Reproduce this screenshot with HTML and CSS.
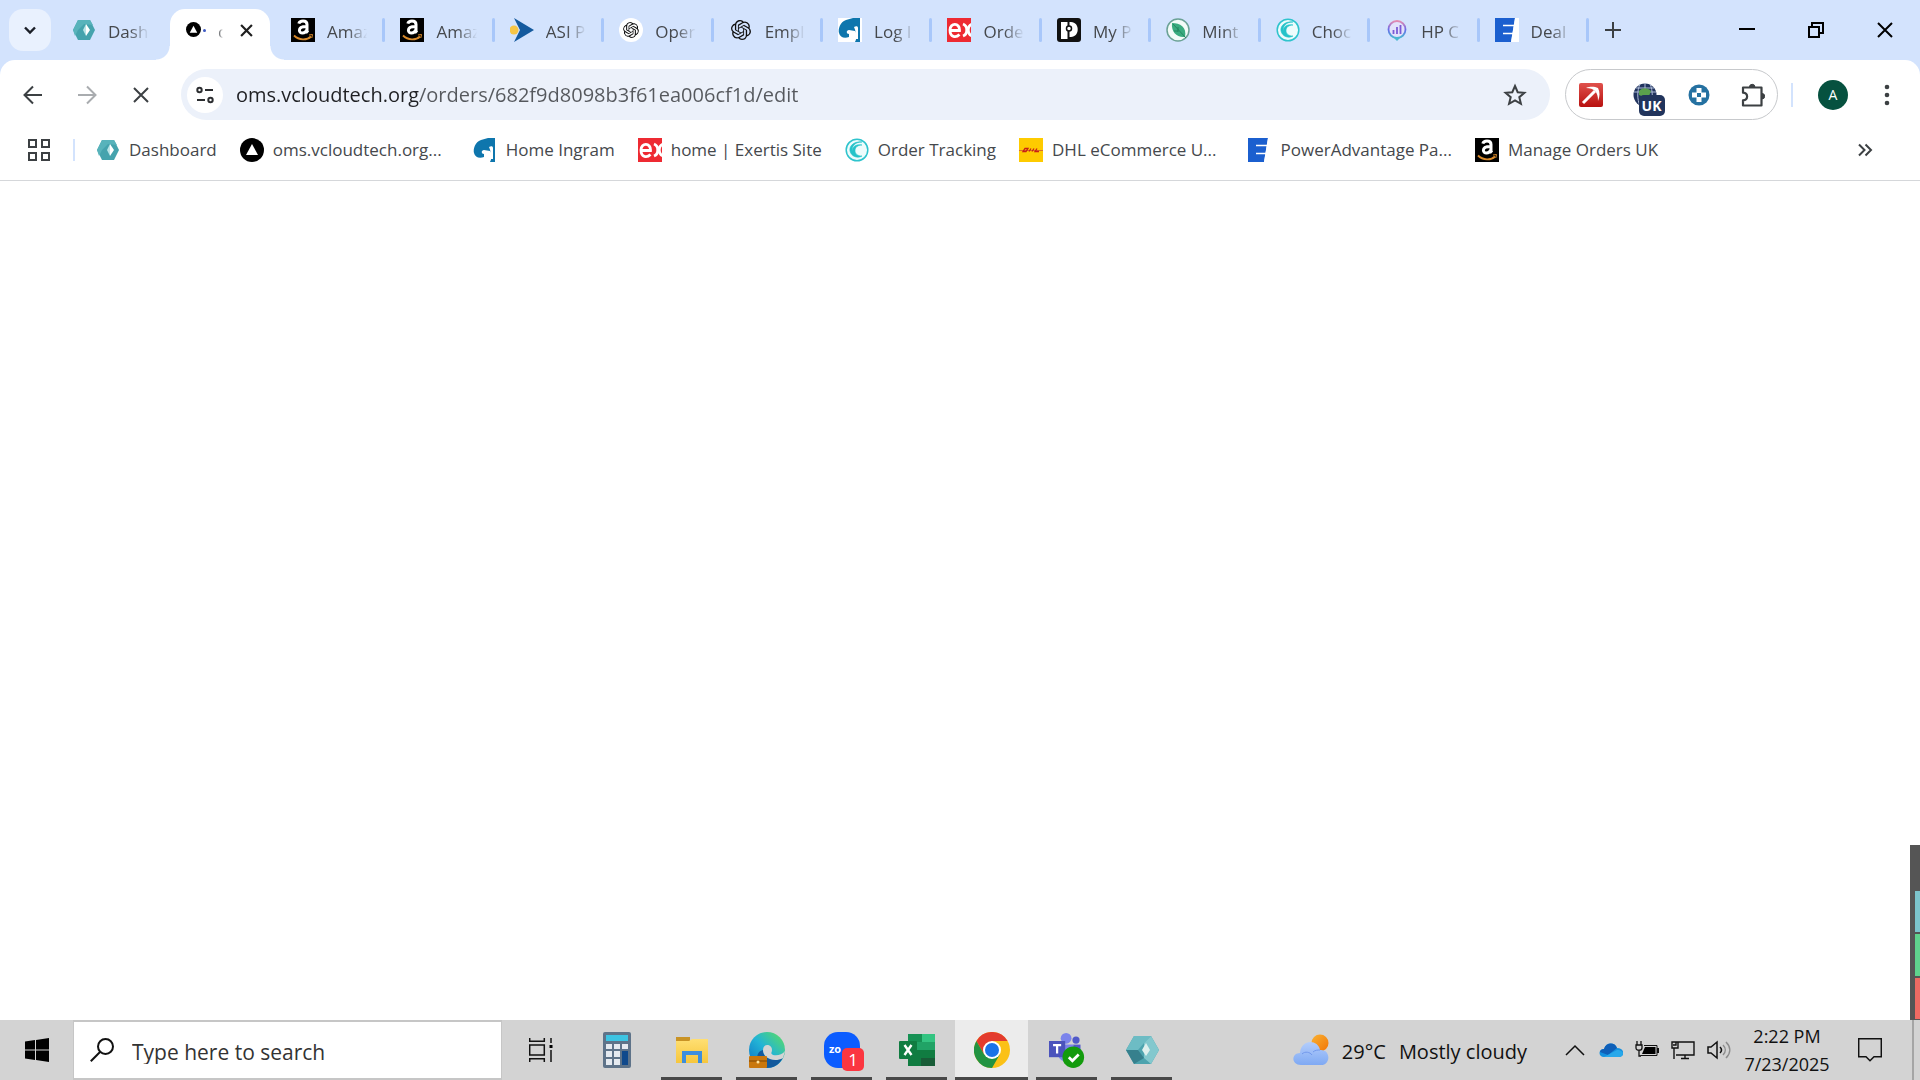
FILE: index.html
```html
<!DOCTYPE html>
<html lang="en">
<head>
<meta charset="utf-8">
<title>oms.vcloudtech.org</title>
<link rel="stylesheet" href="styles.css">
</head>
<body>
<svg class="sprite" aria-hidden="true">
  <defs>
    <linearGradient id="g-edge" x1="0" y1="1" x2="1" y2="0"><stop offset="0" stop-color="#0c6fc4"/><stop offset=".5" stop-color="#22b4d6"/><stop offset="1" stop-color="#5fe05a"/></linearGradient>
    <linearGradient id="g-hp" x1="0" y1="0" x2="0" y2="1"><stop offset="0" stop-color="#e58bb0"/><stop offset=".5" stop-color="#6a6bea"/><stop offset="1" stop-color="#4ab8d0"/></linearGradient>
    <linearGradient id="g-sun" x1="0" y1="0" x2="1" y2="1"><stop offset="0" stop-color="#f9b233"/><stop offset="1" stop-color="#f27405"/></linearGradient>
    <linearGradient id="g-cloud" x1="0" y1="0" x2="0" y2="1"><stop offset="0" stop-color="#b3cdfb"/><stop offset="1" stop-color="#7fa9f3"/></linearGradient>
    <linearGradient id="g-red" x1="0" y1="0" x2="0" y2="1"><stop offset="0" stop-color="#e0514c"/><stop offset="1" stop-color="#b8110f"/></linearGradient>
    <linearGradient id="g-folder" x1="0" y1="0" x2="0" y2="1"><stop offset="0" stop-color="#ffdf73"/><stop offset="1" stop-color="#f6c63c"/></linearGradient>
  </defs>
  <symbol id="i-hex" viewBox="0 0 24 24"><path d="M6 2h12l5 10-5 10H6L1 12z" fill="#45a3ad"/><path d="M6 2h12l3 5-9-1-6 6-3 6-2-6z" fill="#58b3bb"/><path d="M14 6l4 6-4 6z" fill="#fff"/><path d="M14 6v12l-3-6z" fill="#b9e3e6"/></symbol>
  <symbol id="i-tri" viewBox="0 0 24 24"><circle cx="12" cy="12" r="12"/><path d="M12 6l6 11H6z" fill="#fff"/></symbol>
  <symbol id="i-amazon" viewBox="0 0 24 24"><path d="M0 0h24v24H0z"/><path d="M7.800 5.600C8.400 3.600 10 3 12 3c2.800 0 4 1.300 4 3.600v6.200c0 .8.400 1.200 1 1.800M15.600 8.500c-4.500 0-7.200 1-7.200 3.800 0 3.800 5.800 3.600 7.200-.3" fill="none" stroke="#fff" stroke-width="3"/><path d="M3 17.500c5 5 13 5 17 1" fill="none" stroke="#d98a2b" stroke-width="1.800"/><path d="M18 17l3.500-.5-.7 3.500" fill="none" stroke="#d98a2b"/></symbol>
  <symbol id="i-asi" viewBox="0 0 24 24"><path d="M4 0l20 12L4 24l6-12z" fill="#145a9e"/><circle cx="4" cy="12" r="4.500" fill="#f7c646"/></symbol>
  <symbol id="i-openai" viewBox="0 0 24 24"><path fill="currentColor" d="M22.282 9.821a5.985 5.985 0 0 0-.516-4.910 6.046 6.046 0 0 0-6.510-2.900A6.065 6.065 0 0 0 4.981 4.182a5.985 5.985 0 0 0-3.998 2.900 6.046 6.046 0 0 0 .743 7.097 5.980 5.980 0 0 0 .510 4.911 6.051 6.051 0 0 0 6.515 2.900A5.985 5.985 0 0 0 13.260 24a6.056 6.056 0 0 0 5.772-4.206 5.990 5.990 0 0 0 3.997-2.900 6.056 6.056 0 0 0-.747-7.073zM13.260 22.430a4.476 4.476 0 0 1-2.876-1.040l.141-.081 4.779-2.758a.795.795 0 0 0 .392-.681v-6.737l2.020 1.168a.071.071 0 0 1 .038.052v5.583a4.504 4.504 0 0 1-4.494 4.494zM3.600 18.304a4.470 4.470 0 0 1-.535-3.014l.142.085 4.783 2.759a.771.771 0 0 0 .780 0l5.843-3.369v2.332a.080.080 0 0 1-.033.062L9.740 19.950a4.500 4.500 0 0 1-6.140-1.646zM2.340 7.896a4.485 4.485 0 0 1 2.366-1.973V11.600a.766.766 0 0 0 .388.676l5.815 3.355-2.020 1.168a.076.076 0 0 1-.071 0l-4.830-2.786A4.504 4.504 0 0 1 2.340 7.872zm16.597 3.855l-5.833-3.387L15.119 7.200a.076.076 0 0 1 .071 0l4.830 2.791a4.494 4.494 0 0 1-.676 8.105v-5.678a.790.790 0 0 0-.407-.667zm2.010-3.023l-.141-.085-4.774-2.782a.776.776 0 0 0-.785 0L9.409 9.230V6.897a.066.066 0 0 1 .028-.061l4.830-2.787a4.500 4.500 0 0 1 6.680 4.660zm-12.640 4.135l-2.020-1.164a.080.080 0 0 1-.038-.057V6.075a4.500 4.500 0 0 1 7.375-3.453l-.142.080L8.704 5.460a.795.795 0 0 0-.393.681zm1.097-2.365l2.602-1.500 2.607 1.500v2.999l-2.597 1.500-2.607-1.500z"/></symbol>
  <symbol id="i-ingram" viewBox="0 0 24 24"><path d="M8 2l7-2h7v24h-5c2-4 2-9 0-11l-6-1c-3 0-3 4 0 4v3c-5 2-9 0-10-4S2 4 8 2z" fill="#0e76ad"/><path d="M16 9c2-1 4-1 4 1v11h-3c1-4 1-8-1-12z" fill="#fff"/></symbol>
  <symbol id="i-ex" viewBox="0 0 24 24"><path d="M0 0h24v24H0z" fill="#ee2a32"/><path d="M3 12.500h9.500C13 4.500 3 4.500 3 12s6 8 9.500 4.500M16 6c5 2 5 10 0 12M25 6c-5 2-5 10 0 12" fill="none" stroke="#fff" stroke-width="2.800"/></symbol>
  <symbol id="i-myp" viewBox="0 0 24 24"><rect width="24" height="24" rx="3" fill="#111"/><path d="M4 4h10c9 0 9 15 0 15h-2v2H4z" fill="#fff"/><path d="M11.500 3v5M11.500 13v8" stroke="#111" stroke-width="2"/><circle cx="12" cy="10.500" r="2.500" fill="#fff" stroke="#111" stroke-width="1.500"/></symbol>
  <symbol id="i-mint" viewBox="0 0 24 24"><circle cx="12" cy="12" r="11" fill="#f3fbf7" stroke="#6ba296" stroke-width="1.500"/><path d="M6 5c8 0 15 4 13 14-8 1-14-5-13-14z" fill="#3aab7e"/><path d="M7 6l13 14M12 9v5M12 13h-4" stroke="#1e7d59" stroke-width=".8"/></symbol>
  <symbol id="i-swirl" viewBox="0 0 24 24"><circle cx="12" cy="12" r="10.800" fill="#eefcfc" stroke="#2fc4cd" stroke-width="1.500"/><path d="M17 4C9 3 4 8 5 13s7 8 12 5c-4 0-7-2-7-5 0-4 3-6 7-6-7-1-9 2-10 6 0-5 3-9 10-9z" fill="#25c3c9" stroke="#25c3c9" stroke-width=".6"/></symbol>
  <symbol id="i-hp" viewBox="0 0 24 24"><circle cx="12" cy="11.500" r="8.500" fill="#e3e2fb" stroke="url(#g-hp)" stroke-width="1.800"/><path d="M9 20h6l-3 3z" fill="#4ab8d0"/><path d="M8.500 16v-4M12 16V9M15.500 16V7" stroke="#7b5bd6" stroke-width="1.800"/></symbol>
  <symbol id="i-power" viewBox="0 0 24 24"><path d="M0 0h20l-4 24H0z" fill="#1b5fcf"/><path d="M8 7.500h12M8 15.500h10" stroke="#fff" stroke-width="1.500"/><path d="M20 0h4v24h-8z" fill="#fff"/></symbol>
  <symbol id="i-dhl" viewBox="0 0 24 24"><path d="M0 0h24v24H0z" fill="#fecb00"/><path d="M0 12.500h24" stroke="#d8702a"/><path d="M4 13.500l2-3h3l-2 3zM10 13.500l2-3M13 13.500l2-3M18 10.500l-2 3h4" fill="none" stroke="#c81f16" stroke-width="1.300"/></symbol>
</svg>

<header class="browser">
  <div class="tabstrip">
    <button class="tab-search" aria-label="Search tabs"><svg viewBox="0 0 16 16"><path d="M3 5.500l5 5 5-5" fill="none" stroke="#1b1f27" stroke-width="2.400"/></svg></button>
    <a class="tab tab-first" href="#"><svg class="fav"><use href="#i-hex"/></svg><span class="tab-title">Dash</span></a>
    <div class="tab tab-active"><svg class="fav-loading" viewBox="0 0 20 16"><use href="#i-tri" width="15" height="15"/><circle cx="18.500" cy="8.500" r="1.500" fill="#3f5bc4"/></svg><a class="tab-title" href="#">o</a><button class="tab-close" aria-label="Close tab"><svg viewBox="0 0 12 12"><path d="M1 1l10 10M11 1L1 11" stroke="#1f1f1f" stroke-width="2"/></svg></button></div>
    <nav class="tabs" aria-label="Open tabs">
      <a class="tab" href="#"><svg class="fav"><use href="#i-amazon"/></svg><span class="tab-title">Amaz</span></a>
      <a class="tab" href="#"><svg class="fav"><use href="#i-amazon"/></svg><span class="tab-title">Amaz</span></a>
      <a class="tab" href="#"><svg class="fav"><use href="#i-asi"/></svg><span class="tab-title">ASI P</span></a>
      <a class="tab" href="#"><svg class="fav fav-disc"><use href="#i-openai"/></svg><span class="tab-title">Oper</span></a>
      <a class="tab" href="#"><svg class="fav fav-pad"><use href="#i-openai"/></svg><span class="tab-title">Empl</span></a>
      <a class="tab" href="#"><svg class="fav fav-white"><use href="#i-ingram"/></svg><span class="tab-title">Log I</span></a>
      <a class="tab" href="#"><svg class="fav"><use href="#i-ex"/></svg><span class="tab-title">Orde</span></a>
      <a class="tab" href="#"><svg class="fav"><use href="#i-myp"/></svg><span class="tab-title">My P</span></a>
      <a class="tab" href="#"><svg class="fav"><use href="#i-mint"/></svg><span class="tab-title">Mint</span></a>
      <a class="tab" href="#"><svg class="fav"><use href="#i-swirl"/></svg><span class="tab-title">Choc</span></a>
      <a class="tab" href="#"><svg class="fav"><use href="#i-hp"/></svg><span class="tab-title">HP C</span></a>
      <a class="tab" href="#"><svg class="fav"><use href="#i-power"/></svg><span class="tab-title">Deal</span></a>
    </nav>
    <div class="strip-end">
      <button class="new-tab" aria-label="New tab"><svg viewBox="0 0 16 16"><path d="M8 0v16M0 8h16" stroke="#3c4043" stroke-width="2"/></svg></button>
      <div class="win-controls">
        <button aria-label="Minimize"><svg viewBox="0 0 16 16"><path d="M0 7h16" stroke="#000" stroke-width="2"/></svg></button>
        <button aria-label="Restore"><svg viewBox="0 0 16 16"><path d="M1 5h10v10H1zM4 5V1h11v10h-4" fill="none" stroke="#000" stroke-width="2"/></svg></button>
        <button aria-label="Close"><svg viewBox="0 0 16 16"><path d="M1 1l14 14M15 1L1 15" stroke="#000" stroke-width="2"/></svg></button>
      </div>
    </div>
  </div>

  <div class="toolbar">
    <div class="nav-buttons">
      <button aria-label="Back"><svg viewBox="0 0 20 20"><path d="M19 10H2M10 1.500L1.500 10l8.500 8.500" fill="none" stroke="#3c4043" stroke-width="2"/></svg></button>
      <button aria-label="Forward"><svg viewBox="0 0 20 20"><path d="M1 10h17M10 1.500l8.500 8.500-8.500 8.500" fill="none" stroke="#a9acaf" stroke-width="2"/></svg></button>
      <button aria-label="Stop"><svg viewBox="0 0 20 20"><path d="M3 3l14 14M17 3L3 17" stroke="#3c4043" stroke-width="2"/></svg></button>
    </div>
    <div class="omnibox">
      <button class="site-info" aria-label="View site information"><svg viewBox="0 0 18 18"><g fill="none" stroke="#2b2d30" stroke-width="2"><circle cx="3.500" cy="4" r="2.200"/><path d="M9 4h8M1 14h8"/><circle cx="14.500" cy="14" r="2.200"/></g></svg></button>
      <input class="url" type="text" aria-label="Address" value="oms.vcloudtech.org/orders/682f9d8098b3f61ea006cf1d/edit">
      <button class="star" aria-label="Bookmark this tab"><svg viewBox="0 0 24 24"><path d="M12 3l2.700 6.200 6.700.6-5.100 4.400 1.600 6.600-5.900-3.500-5.900 3.500 1.600-6.600-5.100-4.400 6.700-.6z" fill="none" stroke="#3c4043" stroke-width="2"/></svg></button>
    </div>
    <div class="extensions">
      <button aria-label="Pickaxe extension"><svg viewBox="0 0 24 24"><rect width="24" height="24" rx="2" fill="url(#g-red)"/><path d="M4 20L16 8" stroke="#fff" stroke-width="3"/><path d="M7 5c5-2 9-1 12 0 2 4 2 8 0 13 0-5-1-8-3-10s-5-3-9-3z" fill="#fff"/></svg></button>
      <button aria-label="Region extension"><svg viewBox="0 0 24 24"><circle cx="12" cy="12" r="11.500" fill="#22345e"/><path d="M1 9h22M3 5h18M12 0v24M7 1C4 8 4 16 7 23M17 1c3 7 3 15 0 22" fill="none" stroke="#aebcd8"/><path d="M6 8c4-4 9-3 12 0l-2 5-5 1-5-2z" fill="#5aa04c"/></svg><span class="badge">UK</span></button>
      <button aria-label="Tracking extension"><svg viewBox="0 0 24 24"><circle cx="12" cy="12" r="10.500" fill="#2571a1"/><path d="M9.500 5h5v4.500H19v5h-4.500V19h-5v-4.500H5v-5h4.500z" fill="#fff"/><path d="M10 10h4v4h-4z" fill="#2571a1"/></svg></button>
      <button aria-label="Extensions"><svg viewBox="0 0 24 24"><path d="M2 4.500h18.500v18H2v-5.200c5.500-.5 5.500-7.100 0-7.600z" fill="none" stroke="#3c4043" stroke-width="2.200" stroke-linejoin="round"/><path d="M8.500 4a2.700 2.700 0 0 1 5.400 0zM21 10.500a2.700 2.700 0 0 1 0 5.400z" fill="#3c4043" stroke="#3c4043"/></svg></button>
    </div>
    <div class="profile">
      <button class="avatar" aria-label="Profile">A</button>
      <button class="more" aria-label="Menu"><svg viewBox="0 0 6 22"><g fill="#3c4043"><circle cx="3" cy="3" r="2.300"/><circle cx="3" cy="11" r="2.300"/><circle cx="3" cy="19" r="2.300"/></g></svg></button>
    </div>
  </div>

  <nav class="bookmarks" aria-label="Bookmarks">
    <button class="apps" aria-label="All apps"><svg viewBox="0 0 22 22"><path d="M1 1h7v7H1zM14 1h7v7h-7zM1 14h7v7H1zM14 14h7v7h-7z" fill="none" stroke="#3c4043" stroke-width="2"/></svg></button>
    <a href="#"><svg class="fav"><use href="#i-hex"/></svg>Dashboard</a>
    <a href="#"><svg class="fav"><use href="#i-tri"/></svg>oms.vcloudtech.org...</a>
    <a class="wide" href="#"><svg class="fav"><use href="#i-ingram"/></svg>Home Ingram</a>
    <a href="#"><svg class="fav"><use href="#i-ex"/></svg>home | Exertis Site</a>
    <a href="#"><svg class="fav"><use href="#i-swirl"/></svg>Order Tracking</a>
    <a href="#"><svg class="fav"><use href="#i-dhl"/></svg>DHL eCommerce U...</a>
    <a class="wide" href="#"><svg class="fav"><use href="#i-power"/></svg>PowerAdvantage Pa...</a>
    <a href="#"><svg class="fav"><use href="#i-amazon"/></svg>Manage Orders UK</a>
    <button class="overflow" aria-label="More bookmarks"><svg viewBox="0 0 16 14"><path d="M2 1.500L7.500 7 2 12.500M8.500 1.500L14 7l-5.500 5.500" fill="none" stroke="#3c4043" stroke-width="2"/></svg></button>
  </nav>
</header>

<main class="page">
  <aside class="dock" aria-label="Side panel"><i class="teal"></i><i class="green"></i><i class="red"></i></aside>
</main>

<footer class="taskbar">
  <button class="start" aria-label="Start"><svg viewBox="0 0 24 24"><path d="M0 3.500L10 2v9.500H0zM11 1.900L24 0v11.500H11zM0 12.500h10V22L0 20.500zM11 12.500h13V24l-13-1.900z"/></svg></button>
  <label class="search"><svg viewBox="0 0 24 24"><circle cx="15.500" cy="8.500" r="7.500" fill="none" stroke="#111" stroke-width="2"/><path d="M10 14L.8 23.200" stroke="#111" stroke-width="2"/></svg><input type="text" placeholder="Type here to search" aria-label="Type here to search"></label>
  <button class="task-view" aria-label="Task view"><svg viewBox="0 0 24 24"><path d="M.7 0v3.300h14.600V0M.7 7h14.600v10H.7zM.7 24v-3.300h14.600V24M22 0v5M22 12v12" fill="none" stroke="#111" stroke-width="1.500"/><path d="M20.500 7h3v3h-3z"/></svg></button>
  <nav class="apps-row" aria-label="Taskbar apps">
    <button aria-label="Calculator"><svg viewBox="0 0 36 36"><rect x="4" width="28" height="36" rx="2" fill="#5e7389"/><path d="M7 3h22v6H7z" fill="#3cc4e3"/><path d="M7 12h6v5H7zM15 12h6v5h-6zM23 12h6v5h-6zM7 19h6v6H7zM15 19h6v6h-6zM7 27h6v6H7zM15 27h6v6h-6z" fill="#e5eaf0"/><path d="M23 19h6v14h-6z" fill="#10498c"/></svg></button>
    <button class="open" aria-label="File Explorer"><svg viewBox="0 0 36 36"><path d="M2 5h14v5H2z" fill="#c99325"/><path d="M2 9h13l3-2h16v24H2z" fill="url(#g-folder)"/><path d="M8 31V19h20v12h-4v-8H12v8z" fill="#3d8edc"/></svg></button>
    <button class="open" aria-label="Edge"><svg viewBox="0 0 36 36"><circle cx="18" cy="18" r="18" fill="url(#g-edge)"/><path d="M14 18c0 8 8 12 20 7-3 8-10 11-17 11C7 34 5 20 14 18z" fill="#12599d"/><path d="M14 18c0-7 9-6 9 0 0 3-2 3 1 5 4 1 9 0 12-4l-2 7c-9 5-20 0-20-8z" fill="#d4d4d4"/><rect y="24" width="18" height="12" rx="1" fill="#c9770c"/><path d="M0 29h18" stroke="#7d4705"/><circle cx="9" cy="30" r="1.500" fill="#ffe29a"/></svg></button>
    <button class="open" aria-label="Zoom"><svg viewBox="0 0 36 36"><rect width="36" height="36" rx="14" fill="#0b5cff"/><text x="5" y="21" class="zoom-word">zo</text></svg><span class="count">1</span></button>
    <button class="open" aria-label="Excel"><svg viewBox="0 0 36 36"><path d="M9 2h27v32H9z" fill="#21a366"/><path d="M9 2h14v8H9z" fill="#169154"/><path d="M23 2h13v8H23z" fill="#33c481"/><path d="M9 18h27v16H9z" fill="#107c41"/><path d="M22 26h14v8H22z" fill="#185c37"/><rect y="9" width="18" height="18" rx="1" fill="#107c41"/><path d="M5.500 13l7 10M12.500 13l-7 10" stroke="#fff" stroke-width="2.400"/></svg></button>
    <button class="open current" aria-label="Chrome"><svg viewBox="0 0 36 36"><circle cx="18" cy="18" r="18" fill="#fbc116"/><path d="M2.400 9A18 18 0 0 1 33.600 9H18L10.200 22.500z" fill="#e33b2e"/><path d="M2.400 9A18 18 0 0 0 18 36l7.800-13.500H10.200z" fill="#229342"/><circle cx="18" cy="18" r="9" fill="#fff"/><circle cx="18" cy="18" r="7" fill="#1a73e8"/></svg></button>
    <button class="open" aria-label="Teams"><svg viewBox="0 0 40 40"><circle cx="19" cy="7" r="6" fill="#7b83eb"/><circle cx="30" cy="9" r="4" fill="#5059c9"/><path d="M10 14h17v16c-7 6-15 2-17-4z" fill="#7b83eb"/><path d="M27 14h8v12h-8z" fill="#5059c9"/><path d="M0 10h18v18H0z" fill="#4b53bc"/><path d="M4.500 14.500h9M9 14.500V24" stroke="#fff" stroke-width="2.500"/><circle cx="27" cy="28" r="12" fill="#139b0d"/><path d="M22 28l4 4 7-7" fill="none" stroke="#fff" stroke-width="3"/></svg></button>
    <button class="open" aria-label="vCloud"><svg viewBox="0 0 36 36"><path d="M10 4h17l8 14-8 14H10L2 18z" fill="#4da3ae"/><path d="M10 4h17l-7 7-6 7H2z" fill="#6dbcc4"/><path d="M27 4l8 14-8 14-7-6V11z" fill="#83c8ce"/><path d="M2 18h12l6 8-10 6z" fill="#36808d"/><path d="M22 11l4 7-4 6-4-6z" fill="#dff0ee"/></svg></button>
  </nav>
  <div class="tray">
    <button class="weather"><svg viewBox="0 0 36 32"><circle cx="27" cy="9" r="8.500" fill="url(#g-sun)"/><path d="M8 31c-10 0-10-12-1-12C8 5 25 5 27 16c11-1 11 15 1 15z" fill="url(#g-cloud)"/><path d="M9 20c3-3 8-2 10 1M20 18c2-2 5-2 7-2" fill="none" stroke="#7299ec"/></svg><span>29°C</span><span>Mostly cloudy</span></button>
    <div class="tray-icons">
      <button aria-label="Show hidden icons"><svg viewBox="0 0 24 24"><path d="M3 17l9-9 9 9" fill="none" stroke="#111" stroke-width="1.500"/></svg></button>
      <button aria-label="OneDrive"><svg viewBox="0 0 24 24"><path d="M5 19C-1 19-1 11 5 11c2-7 11-7 13-1 8 0 8 9 2 9z" fill="#1490df"/><path d="M1 14c0-2 2-3 4-3 2-7 11-7 13-1l-9 7z" fill="#0f5fb8"/><path d="M5 19l13-7c8 0 7 7 2 7z" fill="#28a8ea"/></svg></button>
      <button aria-label="Battery"><svg viewBox="0 0 24 24"><path d="M2 3v4M6 3v4M1 7h6v3c0 3-6 3-6 0zM4 12v6h2" fill="none" stroke="#111" stroke-width="1.300"/><path d="M9 7.500h13v10H5.500" fill="none" stroke="#111"/><path d="M10 9h10.500v7H7z"/><path d="M23 10v5" stroke="#111" stroke-width="2"/></svg></button>
      <button aria-label="Network"><svg viewBox="0 0 24 24"><path d="M7 4h16v13H5M14 17v3M10 20.500h8M1 4h6v6H1zM3 10v11M2 7h3V4" fill="none" stroke="#111" stroke-width="1.400"/></svg></button>
      <button aria-label="Volume"><svg viewBox="0 0 24 24"><path d="M1 9h3l6-5v16l-6-5H1z" fill="none" stroke="#111" stroke-width="1.500"/><path d="M13 9c2 2 2 4 0 6" fill="none" stroke="#111" stroke-width="1.500"/><path d="M16 7c3 3 3 7 0 10M19 4c5 5 5 11 0 16" fill="none" stroke="#8d8d8d" stroke-width="1.500"/></svg></button>
    </div>
    <button class="clock"><span>2:22 PM</span><span>7/23/2025</span></button>
    <button class="notify" aria-label="Notifications"><svg viewBox="0 0 24 24"><path d="M.7.700h22.600v18H16l-4 4-4-4H.7z" fill="none" stroke="#111" stroke-width="1.500"/></svg></button>
    <button class="show-desktop" aria-label="Show desktop"></button>
  </div>
</footer>
</body>
</html>
```
FILE: styles.css
```css
* { box-sizing: border-box; }
body {
  margin: 0;
  min-height: 100vh;
  display: flex;
  flex-direction: column;
  background: #fff;
  color: #45484c;
  font-family: "Open Sans", "Noto Sans", sans-serif;
  font-size: 17px;
  line-height: 24px;
}
button, input { font: inherit; color: inherit; border: 0; background: none; padding: 0; margin: 0; outline: 0; }
a { color: inherit; text-decoration: none; }
svg { display: block; flex: none; }
.sprite { position: absolute; width: 0; height: 0; }
.fav { width: 24px; height: 24px; color: #111; }
.fav-disc { background: #fff; border-radius: 50%; padding: 4px; }
.fav-pad { padding: 2px; }
.fav-white { background: #fff; }

/* Tab strip */
.browser { background: #d3e3fd; border-bottom: 1px solid #d5d7da; }
.tabstrip { display: flex; height: 60px; align-items: flex-end; }
.tab-search { width: 42px; height: 42px; margin: 0 0 9px 9px; border-radius: 14px; background: #e9f1fe; display: grid; place-items: center; }
.tab-search svg { width: 16px; height: 16px; }
.tab { position: relative; display: flex; align-items: center; gap: 12px; height: 51px; padding: 0 16px 9px; min-width: 0; }
.tab-title { flex: 1; padding-top: 3px; overflow: hidden; white-space: nowrap; mask-image: linear-gradient(90deg, #000 50%, transparent 98%); }
.tab-first { width: 119px; padding-left: 21px; padding-right: 20px; }
.tab-active { width: 100px; background: #fff; border-radius: 15px 15px 0 0; padding-right: 17px; }
.tab-active::before, .tab-active::after { content: ""; position: absolute; bottom: 0; width: 14px; height: 14px; }
.tab-active::before { right: 100%; background: radial-gradient(circle at 0 0, transparent 13px, #fff 14px); }
.tab-active::after { left: 100%; background: radial-gradient(circle at 100% 0, transparent 13px, #fff 14px); }
.tab-active .tab-title { mask-image: linear-gradient(90deg, #000, transparent 50%); }
.fav-loading { width: 20px; height: 16px; }
.tab-close svg { width: 13px; height: 13px; }
.tabs { flex: 1; min-width: 0; display: grid; grid-template-columns: repeat(12, minmax(0, 1fr)); margin-left: 5px; }
.tabs .tab::after { content: ""; position: absolute; right: -1px; top: 9px; width: 3px; height: 24px; border-radius: 2px; background: #a8c7fa; }
.strip-end { width: 332px; height: 60px; display: flex; justify-content: space-between; align-items: center; padding: 0 27px 0 17px; }
.strip-end svg { width: 16px; height: 16px; }
.win-controls { display: flex; gap: 53px; }

/* Toolbar */
.toolbar { display: flex; align-items: center; height: 69px; background: #fff; border-radius: 15px 15px 0 0; padding: 0 30px 0 23px; }
.nav-buttons { display: flex; gap: 34px; margin-right: 30px; }
.nav-buttons svg { width: 20px; height: 20px; }
.omnibox { flex: 1; display: flex; align-items: center; height: 51px; border-radius: 26px; background: #ecf1fa; padding: 0 23px 0 6px; }
.site-info { width: 36px; height: 36px; border-radius: 50%; background: #fff; display: grid; place-items: center; margin-right: 13px; }
.site-info svg { width: 18px; height: 18px; }
.url { flex: 1; min-width: 0; height: 30px; font-size: 20px; color: transparent; background: linear-gradient(90deg, #1f2023 182px, #55585d 182px); background-clip: text; -webkit-background-clip: text; }
.star svg { width: 24px; height: 24px; }
.extensions { display: flex; gap: 30px; align-items: center; justify-content: center; width: 213px; height: 51px; margin-left: 15px; border: 1px solid #c7c9cc; border-radius: 26px; }
.extensions button { position: relative; }
.extensions svg { width: 24px; height: 24px; }
.badge { position: absolute; left: 6px; top: 12px; width: 26px; height: 21px; border-radius: 5px; background: #21345c; color: #fff; font-size: 14px; line-height: 21px; font-weight: 700; text-align: center; }
.profile { display: flex; align-items: center; margin-left: 13px; padding-left: 27px; background: linear-gradient(#d3e3fd, #d3e3fd) 0 50% / 2px 24px no-repeat; }
.avatar { width: 30px; height: 30px; border-radius: 50%; background: #06513f; color: #fff; font-size: 14px; }
.more { margin-left: 36px; }
.more svg { width: 6px; height: 22px; }

/* Bookmarks */
.bookmarks { display: flex; align-items: center; height: 51px; padding: 0 47px 9px 28px; gap: 23px; background: #fff; white-space: nowrap; }
.bookmarks a { display: flex; align-items: center; gap: 9px; }
.bookmarks .wide { margin-left: 8px; }
.apps { padding-right: 23px; margin-right: -2px; border-right: 2px solid #d3e3fd; }
.apps svg { width: 22px; height: 22px; }
.overflow { margin-left: auto; }
.overflow svg { width: 16px; height: 14px; }

/* Page area */
.page { flex: 1; position: relative; }
.dock { position: absolute; right: 0; bottom: 0; width: 10px; height: 175px; padding: 46px 0 1px 5px; background: #555; display: flex; flex-direction: column; gap: 2px; }
.dock i { flex: 1; }
.teal { background: #7cc4cc; }
.green { background: #5fd38d; }
.red { background: #ee6a63; }

/* Taskbar */
.taskbar { display: flex; height: 60px; background: #d3d3d3; color: #111; font-size: 20px; }
.start { width: 73px; display: grid; place-items: center; }
.start svg { width: 24px; height: 24px; }
.search { width: 429px; display: flex; align-items: center; gap: 18px; padding: 0 16px; background: #fff; border: solid #c6c6c6; border-width: 2px 1px; font-size: 21px; }
.search svg { width: 24px; height: 24px; }
.search input { flex: 1; min-width: 0; padding-top: 4px; }
.search input::placeholder { color: #333; opacity: 1; }
.task-view { width: 77px; display: grid; place-items: center; }
.task-view svg { width: 24px; height: 24px; }
.apps-row { display: flex; }
.apps-row button { position: relative; width: 75px; display: grid; place-items: center; }
.apps-row svg { width: 36px; height: 36px; }
.open::after { content: ""; position: absolute; bottom: 0; left: 7px; right: 7px; height: 3px; background: #484848; }
.apps-row .current { width: 73px; margin: 0 1px; background: #ececec; }
.apps-row .current::after { left: 0; right: 0; }
.zoom-word { font-size: 11px; font-weight: 700; fill: #fff; }
.count { position: absolute; right: 15px; top: 28px; width: 22px; height: 23px; border-radius: 5px; background: #fb3640; color: #fff; font-size: 17px; line-height: 23px; }
.tray { display: flex; align-items: center; margin-left: auto; }
.weather { display: flex; align-items: center; gap: 13px; }
.weather span { padding-top: 3px; }
.weather svg { width: 36px; height: 32px; }
.tray-icons { display: flex; gap: 12px; margin-left: 36px; }
.tray-icons svg { width: 24px; height: 24px; }
.clock { width: 112px; display: grid; font-size: 18px; line-height: 28px; text-align: center; }
.notify { margin: 0 30px 0 15px; }
.notify svg { width: 24px; height: 24px; }
.show-desktop { width: 8px; height: 60px; border-left: 2px solid #a5a5a5; }
```
